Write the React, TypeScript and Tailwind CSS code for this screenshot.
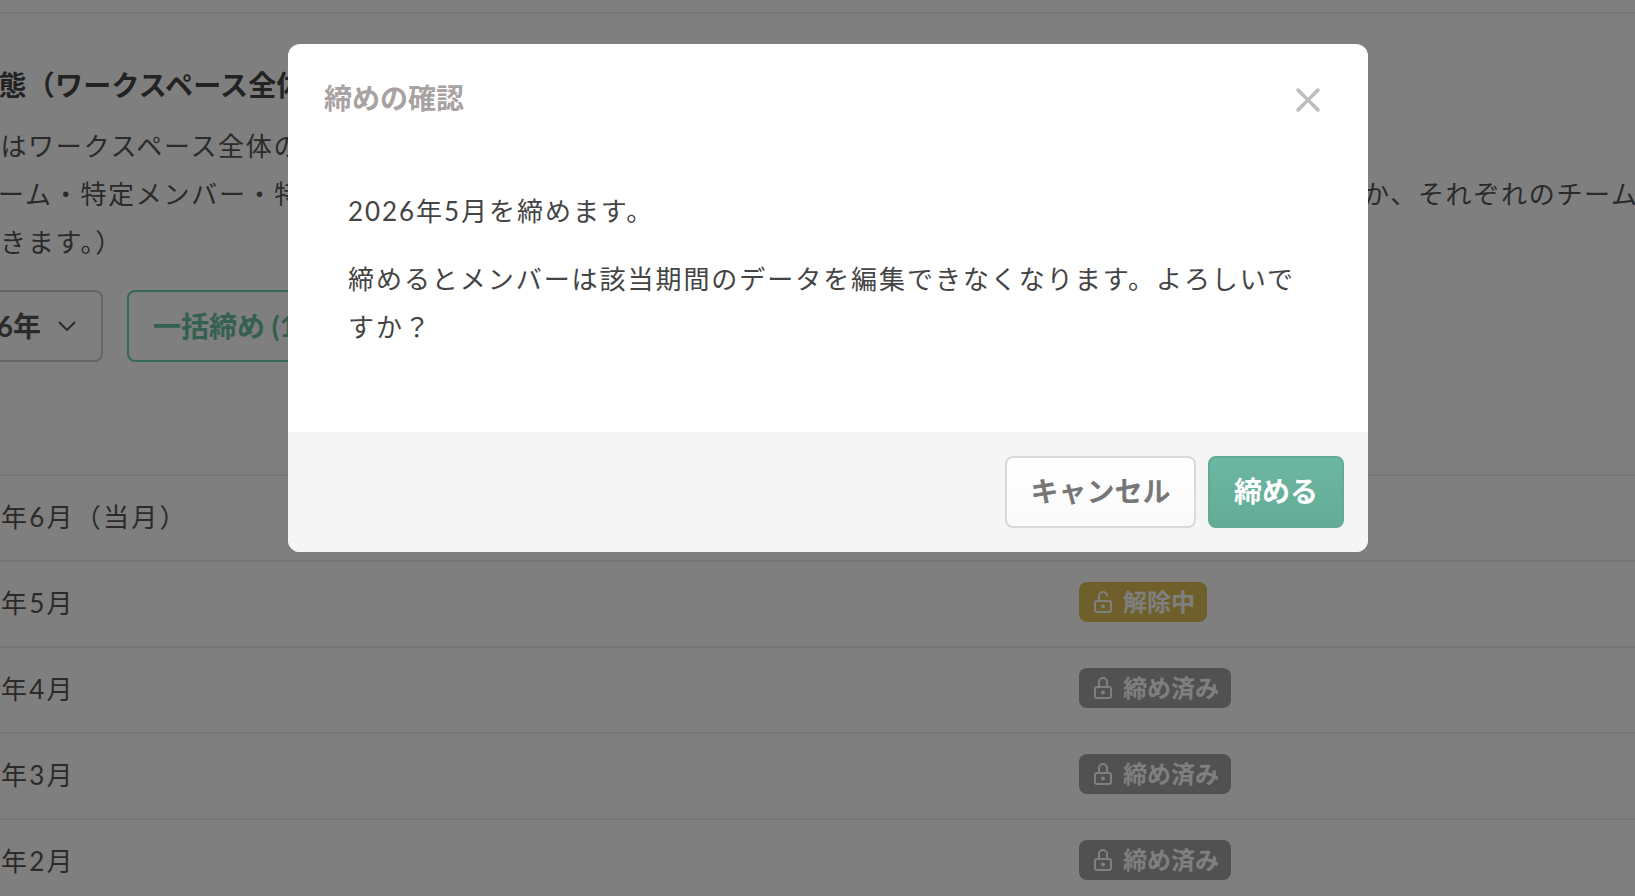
const font = "font-['Lato','Noto_Sans_CJK_JP','Noto_Sans',sans-serif]";

function LockIcon({ open }: { open?: boolean }) {
    return (
        <svg width="22" height="24" viewBox="0 0 22 24" fill="none" stroke="currentColor" strokeWidth="2" strokeLinecap="round">
            <rect x="3" y="11" width="16" height="11" rx="2" />
            <path d={open ? "M7 11V6a4 4 0 0 1 8 0" : "M7 11V6a4 4 0 0 1 8 0v5"} />
            <circle cx="11" cy="16.5" r="1" fill="currentColor" />
        </svg>
    );
}

function Badge({ label, tone, open }: { label: string; tone: string; open?: boolean }) {
    return (
        <span className={`inline-flex items-center gap-[9px] h-10 pl-[13px] pr-[12px] rounded-lg text-[24px] tracking-normal font-bold text-white ${tone}`}>
            <LockIcon open={open} />
            <span className="mt-[-1px]">{label}</span>
        </span>
    );
}

const rows = [
    { month: "2026年6月（当月）" },
    { month: "2026年5月", label: "解除中", tone: "bg-[#dfbf55]", open: true },
    { month: "2026年4月", label: "締め済み", tone: "bg-[#a2a2a2]" },
    { month: "2026年3月", label: "締め済み", tone: "bg-[#a2a2a2]" },
    { month: "2026年2月", label: "締め済み", tone: "bg-[#a2a2a2]" },
];

export default function App() {
    return (
        <div className={`relative w-[1635px] h-[896px] overflow-hidden bg-white text-[#555] ${font}`}>
            {/* page behind the dialog, scrolled off to the left */}
            <div className="border-b-2 border-[#eee] h-[14px]" />
            <div className="ml-[-64px] w-[1800px]">
                <h2 className="mt-[51px] ml-[-22px] text-[28px] leading-[40px] tracking-[0.2px] font-bold text-[#444] whitespace-nowrap">締め状態（ワークスペース全体</h2>
                <div className="mt-[17px] text-[26px] leading-[48px] tracking-[1.7px] whitespace-nowrap">
                    <p className="ml-[9px]">締めはワークスペース全体の</p>
                    <p className="ml-[-21px]">
                        特定チーム・特定メンバー・特
                        <span className="ml-[1061px]">か、それぞれのチーム</span>
                    </p>
                    <p className="ml-[-19px]">解除できます。）</p>
                </div>
                <div className="mt-[24px] flex gap-6">
                    <div className="w-[167px] h-[72px] flex items-center justify-end gap-[17px] pr-6 border-2 border-[#ccc] rounded-lg text-[28px] font-bold">
                        <span className="mt-[-1px]">2026年</span>
                        <svg className="mr-[1px]" width="18" height="10" viewBox="0 0 18 10" fill="none" stroke="currentColor" strokeWidth="2"><path d="M1 1l8 8 8-8" /></svg>
                    </div>
                    <div className="h-[72px] w-[400px] flex items-center pl-6 border-2 border-[#6ed2b4] rounded-lg text-[28px] font-bold text-[#66c0a2]">一括締め (1</div>
                </div>
                <div className="mt-[112px] border-t-2 border-[#eee]">
                    {rows.map((row) => (
                        <div key={row.month} className="h-[86px] pb-[4px] border-b-2 border-[#eee] flex items-center text-[26px] tracking-[2.2px]">
                            <span className="w-[1143px] ml-[-4px] mr-[4px] mt-[3px] whitespace-nowrap">{row.month}</span>
                            {row.label && <Badge label={row.label} tone={row.tone!} open={row.open} />}
                        </div>
                    ))}
                </div>
            </div>

            {/* dialog */}
            <div className="absolute inset-0 bg-black/50 flex items-start justify-center pl-[21px] pt-[44px]">
                <div className="w-[1080px] h-[508px] bg-white rounded-xl overflow-hidden flex flex-col">
                    <div className="h-[104px] pl-9 pr-[48px] flex items-center justify-between">
                        <h3 className="mt-[4px] text-[28px] font-bold text-[#a8a2a2]">締めの確認</h3>
                        <svg className="mt-[8px]" width="24" height="24" viewBox="0 0 24 24" fill="none" stroke="#bdbdbd" strokeWidth="3.5" strokeLinecap="round"><path d="M2 2l20 20M22 2L2 22" /></svg>
                    </div>
                    <div className="flex-1 pl-[60px] pr-[60px] pt-[39px] text-[26px] leading-[48px] tracking-[1.95px] text-[#444]">
                        <p>2026年5月を締めます。</p>
                        <p className="mt-[20px]">締めるとメンバーは該当期間のデータを編集できなくなります。よろしいですか？</p>
                    </div>
                    <div className="h-[120px] bg-[#f5f5f5] flex items-center justify-end gap-3 pr-6">
                        <button className="w-[191px] h-[72px] pb-[2px] rounded-lg bg-linear-to-b from-white to-[#fafafa] border-2 border-[#d9d9d9] text-[28px] font-bold text-[#777]">キャンセル</button>
                        <button className="w-[136px] h-[72px] pb-[2px] rounded-lg bg-linear-to-b from-[#6cb7a3] to-[#63ab96] border-2 border-[#63a994] text-[28px] font-bold text-white">締める</button>
                    </div>
                </div>
            </div>
        </div>
    );
}
